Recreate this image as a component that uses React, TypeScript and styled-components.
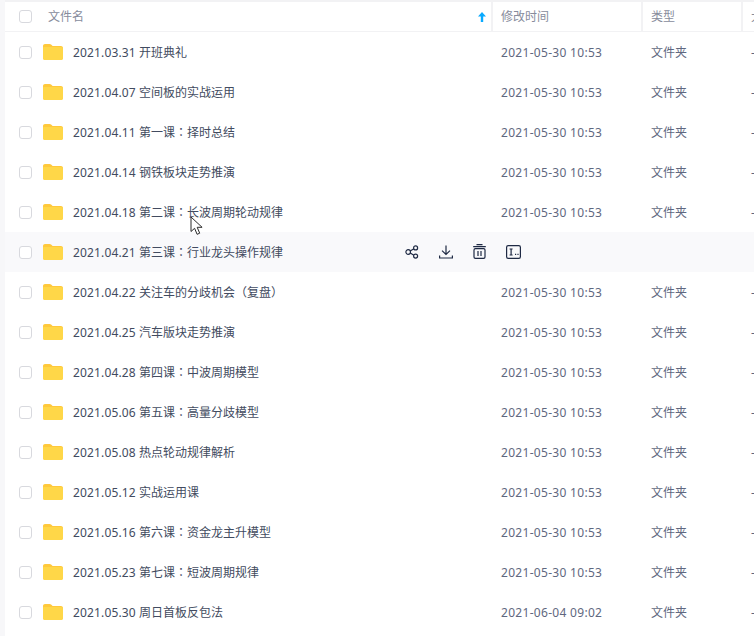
import type { FC } from "react";
import styled, { createGlobalStyle } from "styled-components";

const GlobalStyle = createGlobalStyle`
  html, body {
    margin: 0;
    padding: 0;
    background: #fff;
    overflow: hidden;
  }
  body {
    font-family: "Noto Sans", "Noto Sans CJK SC", sans-serif;
    font-size: 12px;
    line-height: 16px;
  }
`;

interface FileItem {
  date: string;
  title: string;
  time: string;
}

const files: FileItem[] = [
  { date: "2021.03.31", title: "开班典礼", time: "2021-05-30 10:53" },
  { date: "2021.04.07", title: "空间板的实战运用", time: "2021-05-30 10:53" },
  { date: "2021.04.11", title: "第一课：择时总结", time: "2021-05-30 10:53" },
  { date: "2021.04.14", title: "钢铁板块走势推演", time: "2021-05-30 10:53" },
  { date: "2021.04.18", title: "第二课：长波周期轮动规律", time: "2021-05-30 10:53" },
  { date: "2021.04.21", title: "第三课：行业龙头操作规律", time: "" },
  { date: "2021.04.22", title: "关注车的分歧机会（复盘）", time: "2021-05-30 10:53" },
  { date: "2021.04.25", title: "汽车版块走势推演", time: "2021-05-30 10:53" },
  { date: "2021.04.28", title: "第四课：中波周期模型", time: "2021-05-30 10:53" },
  { date: "2021.05.06", title: "第五课：高量分歧模型", time: "2021-05-30 10:53" },
  { date: "2021.05.08", title: "热点轮动规律解析", time: "2021-05-30 10:53" },
  { date: "2021.05.12", title: "实战运用课", time: "2021-05-30 10:53" },
  { date: "2021.05.16", title: "第六课：资金龙主升模型", time: "2021-05-30 10:53" },
  { date: "2021.05.23", title: "第七课：短波周期规律", time: "2021-05-30 10:53" },
  { date: "2021.05.30", title: "周日首板反包法", time: "2021-06-04 09:02" },
];

const HOVER_INDEX = 5;

// 전각 문장부호는 가운데 정렬 글꼴로 표시
const renderTitle = (title: string) =>
  title.split(/([：（）])/).map((part, i) =>
    /^[：（）]$/.test(part) ? <Punct key={i}>{part}</Punct> : part
  );

const FolderIcon: FC = () => (
  <svg width="20" height="16" viewBox="0 0 20 16">
    <path
      d="M0 2C0 .9.9 0 2 0h4.6c.6 0 1.1.2 1.5.6L9.6 2H18c1.1 0 2 .9 2 2v10c0 1.1-.9 2-2 2H2c-1.1 0-2-.9-2-2z"
      fill="#ffc93c"
    />
    <path d="M0 4.2C0 3.5.5 3 1.2 3H18c1.1 0 2 .9 2 2v9c0 1.1-.9 2-2 2H2c-1.1 0-2-.9-2-2z" fill="#ffd748" />
  </svg>
);

const ShareIcon: FC = () => (
  <svg width="14" height="14" viewBox="0 0 14 14" fill="none" stroke="#1f2a44" strokeWidth="1.2">
    <circle cx="3.2" cy="7" r="2.3" />
    <circle cx="10.6" cy="2.9" r="2" />
    <circle cx="10.6" cy="11.1" r="2" />
    <path d="M5.2 5.9l3.7-2.1M5.2 8.1l3.7 2.1" />
  </svg>
);

const DownloadIcon: FC = () => (
  <svg width="14" height="14" viewBox="0 0 14 14" fill="none" stroke="#1f2a44" strokeWidth="1.2">
    <path d="M7 .5v8.6M3 5.6L7 9.4l4-3.8M.6 10.4v2.6h12.8v-2.6" />
  </svg>
);

const TrashIcon: FC = () => (
  <svg width="13" height="15" viewBox="0 0 13 15" fill="none" stroke="#1f2a44" strokeWidth="1.2">
    <path d="M3.5.6h6M.2 2.6h12.6" />
    <rect x="1" y="4.6" width="11" height="9.8" rx="1.4" />
    <path d="M5 7v5M8 7v5" />
  </svg>
);

const RenameIcon: FC = () => (
  <svg width="15" height="14" viewBox="0 0 15 14" fill="none" stroke="#1f2a44" strokeWidth="1.2">
    <rect x=".6" y=".6" width="13.8" height="12.8" rx="1.6" />
    <path d="M3.6 4h3M5.1 4v6M3.6 10h3" />
    <path d="M9 9.4h1.2M11.4 9.4h1.2" />
  </svg>
);

const PointerIcon: FC = () => (
  <svg width="14" height="20" viewBox="0 0 14 20">
    <path
      d="M1 1v14.5l3.6-3.2 2.5 6 2.6-1.1-2.5-5.9h4.9z"
      fill="#fff"
      stroke="#2b2b2b"
      strokeWidth="1"
      strokeLinejoin="miter"
    />
  </svg>
);

const App: FC = () => {
  return (
    <Page>
      <GlobalStyle />
      <SideStrip />
      <Main>
        <Header>
          <HeadName>
            <Check />
            <HeadLabel>文件名</HeadLabel>
            <SortArrow viewBox="0 0 8 10">
              <path d="M4 0l4 4.6H5.2V10H2.8V4.6H0z" />
            </SortArrow>
          </HeadName>
          <HeadCell>修改时间</HeadCell>
          <HeadCell>类型</HeadCell>
          <HeadCell>大小</HeadCell>
        </Header>
        {files.map((file, i) => (
          <Row key={file.date} $hover={i === HOVER_INDEX}>
            <NameCell>
              <Check />
              <FolderBox>
                <FolderIcon />
              </FolderBox>
              <FileName>
                <DateText>{file.date}</DateText>
                {renderTitle(file.title)}
              </FileName>
              {i === 4 && (
                <Pointer>
                  <PointerIcon />
                </Pointer>
              )}
              {i === HOVER_INDEX && (
                <Actions>
                  <ShareIcon />
                  <DownloadIcon />
                  <TrashIcon />
                  <RenameIcon />
                </Actions>
              )}
            </NameCell>
            <TimeCell>{file.time}</TimeCell>
            <Cell>{i === HOVER_INDEX ? "" : "文件夹"}</Cell>
            <Cell>{i === HOVER_INDEX ? "" : "-"}</Cell>
          </Row>
        ))}
      </Main>
    </Page>
  );
};

export default App;

const Page = styled.div`
  display: flex;
  width: 754px;
  height: 636px;
  overflow: hidden;
`;

const SideStrip = styled.div`
  width: 5px;
  flex: none;
  background: #f7f7f9;
`;

const Main = styled.div`
  width: 749px;
  flex: none;
  border-top: 2px solid #f2f2f4;
`;

const columns = "488px 150px 100px 100px";

const Header = styled.div`
  display: grid;
  grid-template-columns: ${columns};
  height: 29px;
  border-bottom: 1px solid #f2f2f4;
  color: #878c9c;
`;

const HeadName = styled.div`
  display: flex;
  align-items: center;
  padding-left: 14px;
  border-right: 2px solid #f2f2f4;
`;

const HeadLabel = styled.span`
  margin-left: 16px;
  padding-top: 1px;
  flex: 1;
`;

const SortArrow = styled.svg`
  width: 8px;
  height: 10px;
  margin-right: 5px;
  fill: #09aaff;
`;

const HeadCell = styled.div`
  display: flex;
  align-items: center;
  padding: 1px 0 0 8px;
  white-space: nowrap;
  border-right: 2px solid #f2f2f4;
`;

const Row = styled.div<{ $hover: boolean }>`
  display: grid;
  grid-template-columns: ${columns};
  height: 40px;
  background: ${(p) => (p.$hover ? "#f9f9fb" : "transparent")};
`;

const NameCell = styled.div`
  position: relative;
  display: flex;
  align-items: center;
  padding-left: 14px;
`;

const Check = styled.span`
  display: block;
  width: 11px;
  height: 11px;
  flex: none;
  border: 1px solid #d8d9de;
  border-radius: 3px;
  background: #fff;
`;

const FolderBox = styled.span`
  display: flex;
  margin-left: 11px;
`;

const FileName = styled.span`
  margin-left: 10px;
  padding-top: 1px;
  color: #424b60;
  white-space: nowrap;
`;

const DateText = styled.span`
  display: inline-block;
  width: 66px;
  letter-spacing: 0.15px;
`;

const Punct = styled.span`
  display: inline-block;
  width: 12px;
  text-align: center;
  font-family: "Noto Sans CJK TC", sans-serif;
`;

const Pointer = styled.span`
  position: absolute;
  left: 185px;
  top: 24px;
  display: flex;
  z-index: 2;
`;

const Actions = styled.div`
  position: absolute;
  left: 400px;
  top: 12px;
  display: flex;
  align-items: center;
  gap: 20px;
`;

const Cell = styled.div`
  display: flex;
  align-items: center;
  padding: 1px 0 0 8px;
  color: #5f6880;
  white-space: nowrap;
`;

const TimeCell = styled(Cell)`
  letter-spacing: 0.3px;
`;
